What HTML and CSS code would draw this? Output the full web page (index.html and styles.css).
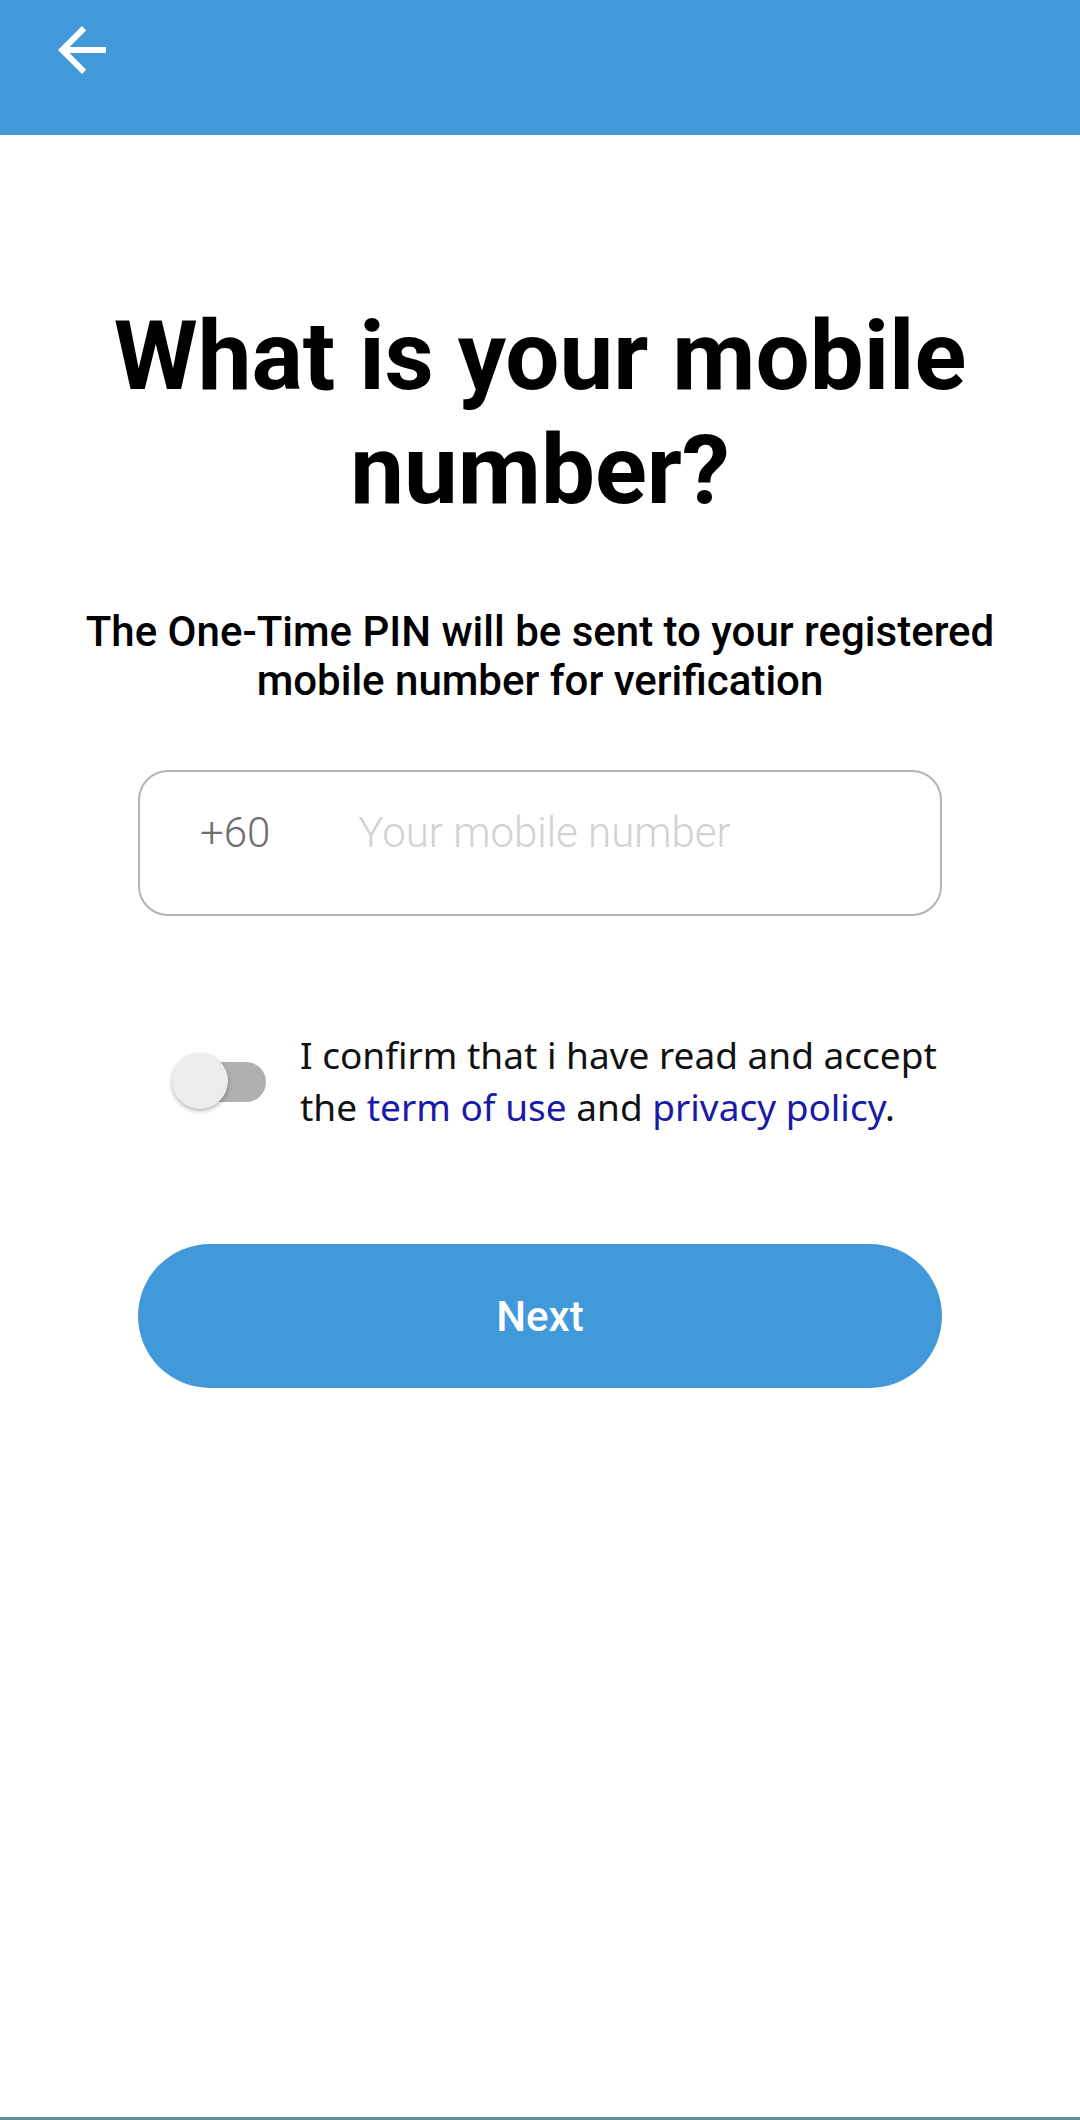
FILE: index.html
```html
<!DOCTYPE html>
<html lang="en">
  <head>
    <meta charset="UTF-8" />
    <meta name="viewport" content="width=device-width, initial-scale=1.0" />
    <title>Mobile Number</title>
    <link rel="stylesheet" href="styles.css">
  </head>
  <body>
    <div class="screen">
      <header class="app-bar">
        <button type="button" class="back-btn" aria-label="Back">
          <svg xmlns="http://www.w3.org/2000/svg" width="72" height="72" viewBox="0 0 24 24" fill="#ffffff">
            <path d="M20 11H7.83l5.59-5.59L12 4l-8 8 8 8 1.41-1.41L7.83 13H20v-2z"/>
          </svg>
        </button>
      </header>

      <main class="content">
        <h1>What is your mobile number?</h1>
        <p class="description">The One-Time PIN will be sent to your registered mobile number for verification</p>

        <div class="phone-field">
          <span class="prefix">+60</span>
          <input type="tel" id="mobile" placeholder="Your mobile number" />
        </div>

        <div class="consent">
          <label class="switch">
            <input type="checkbox" id="agree" />
            <span class="track"></span>
            <span class="thumb"></span>
          </label>
          <p class="consent-text">I confirm that i have read and accept the <a href="#">term of use</a> and <a href="#">privacy policy</a>.</p>
        </div>

        <button type="button" class="next-btn">Next</button>
      </main>

      <div class="nav-line"></div>
    </div>
  </body>
</html>
```

FILE: styles.css
```css
:root {
  --primary: #4299d9;
  --text: #000000;
  --border: #b4b4b4;
  --link: #1a1aa8;
}

* {
  margin: 0;
  padding: 0;
  box-sizing: border-box;
}

body {
  font-family: Roboto, 'Liberation Sans', sans-serif;
  background-color: #ffffff;
  color: var(--text);
}

.screen {
  min-height: 100vh;
  display: flex;
  flex-direction: column;
}

.app-bar {
  height: 135px;
  background-color: var(--primary);
  padding: 14px 0 0 46px;
}

.back-btn {
  display: block;
  width: 72px;
  height: 72px;
  background: none;
  border: none;
  cursor: pointer;
}

.back-btn svg {
  display: block;
}

.content {
  flex: 1;
  padding: 164px 138px 0;
  display: flex;
  flex-direction: column;
  align-items: center;
  text-align: center;
}

h1 {
  font-size: 96px;
  font-weight: 700;
  line-height: 114px;
  margin: 0 -60px;
}

.description {
  margin: 80px -70px 0;
  font-size: 42px;
  font-weight: 500;
  line-height: 49px;
}

.phone-field {
  margin-top: 65px;
  width: 100%;
  height: 146px;
  border: 2.5px solid var(--border);
  border-radius: 30px;
  display: flex;
  align-items: flex-start;
  padding: 36px 0 0 60px;
  gap: 88px;
}

.prefix {
  font-size: 42px;
  font-weight: 300;
  color: #6e6e6e;
  line-height: 50px;
}

.phone-field input {
  flex: 1;
  border: none;
  outline: none;
  font-family: Roboto, 'Liberation Sans', sans-serif;
  font-size: 42px;
  font-weight: 300;
  line-height: 50px;
  height: 50px;
  color: #333333;
  background: transparent;
}

.phone-field input::placeholder {
  color: #d2d2d2;
}

.consent {
  margin: 113px -30px 0 0;
  align-self: stretch;
  display: flex;
  align-items: center;
  padding-left: 34px;
  text-align: left;
}

.switch {
  position: relative;
  width: 96px;
  height: 60px;
  flex-shrink: 0;
  margin-right: 32px;
}

.switch input {
  display: none;
}

.track {
  position: absolute;
  left: 20px;
  right: 2px;
  top: 11px;
  height: 40px;
  border-radius: 20px;
  background-color: #b0b0b0;
}

.thumb {
  position: absolute;
  left: 0;
  top: 2px;
  width: 56px;
  height: 56px;
  border-radius: 50%;
  background-color: #ececec;
  box-shadow: 0 2px 4px rgba(0, 0, 0, 0.3);
}

.consent-text {
  font-family: 'Noto Sans', sans-serif;
  font-size: 37px;
  line-height: 52px;
  color: #111111;
}

.consent-text a {
  color: var(--link);
  text-decoration: none;
}

.next-btn {
  margin-top: 111px;
  width: 100%;
  height: 144px;
  border: none;
  border-radius: 72px;
  background-color: var(--primary);
  color: #ffffff;
  font-family: Roboto, 'Liberation Sans', sans-serif;
  font-size: 42px;
  font-weight: 500;
  cursor: pointer;
}

.nav-line {
  height: 3px;
  background-color: #5e8e9a;
}
```
